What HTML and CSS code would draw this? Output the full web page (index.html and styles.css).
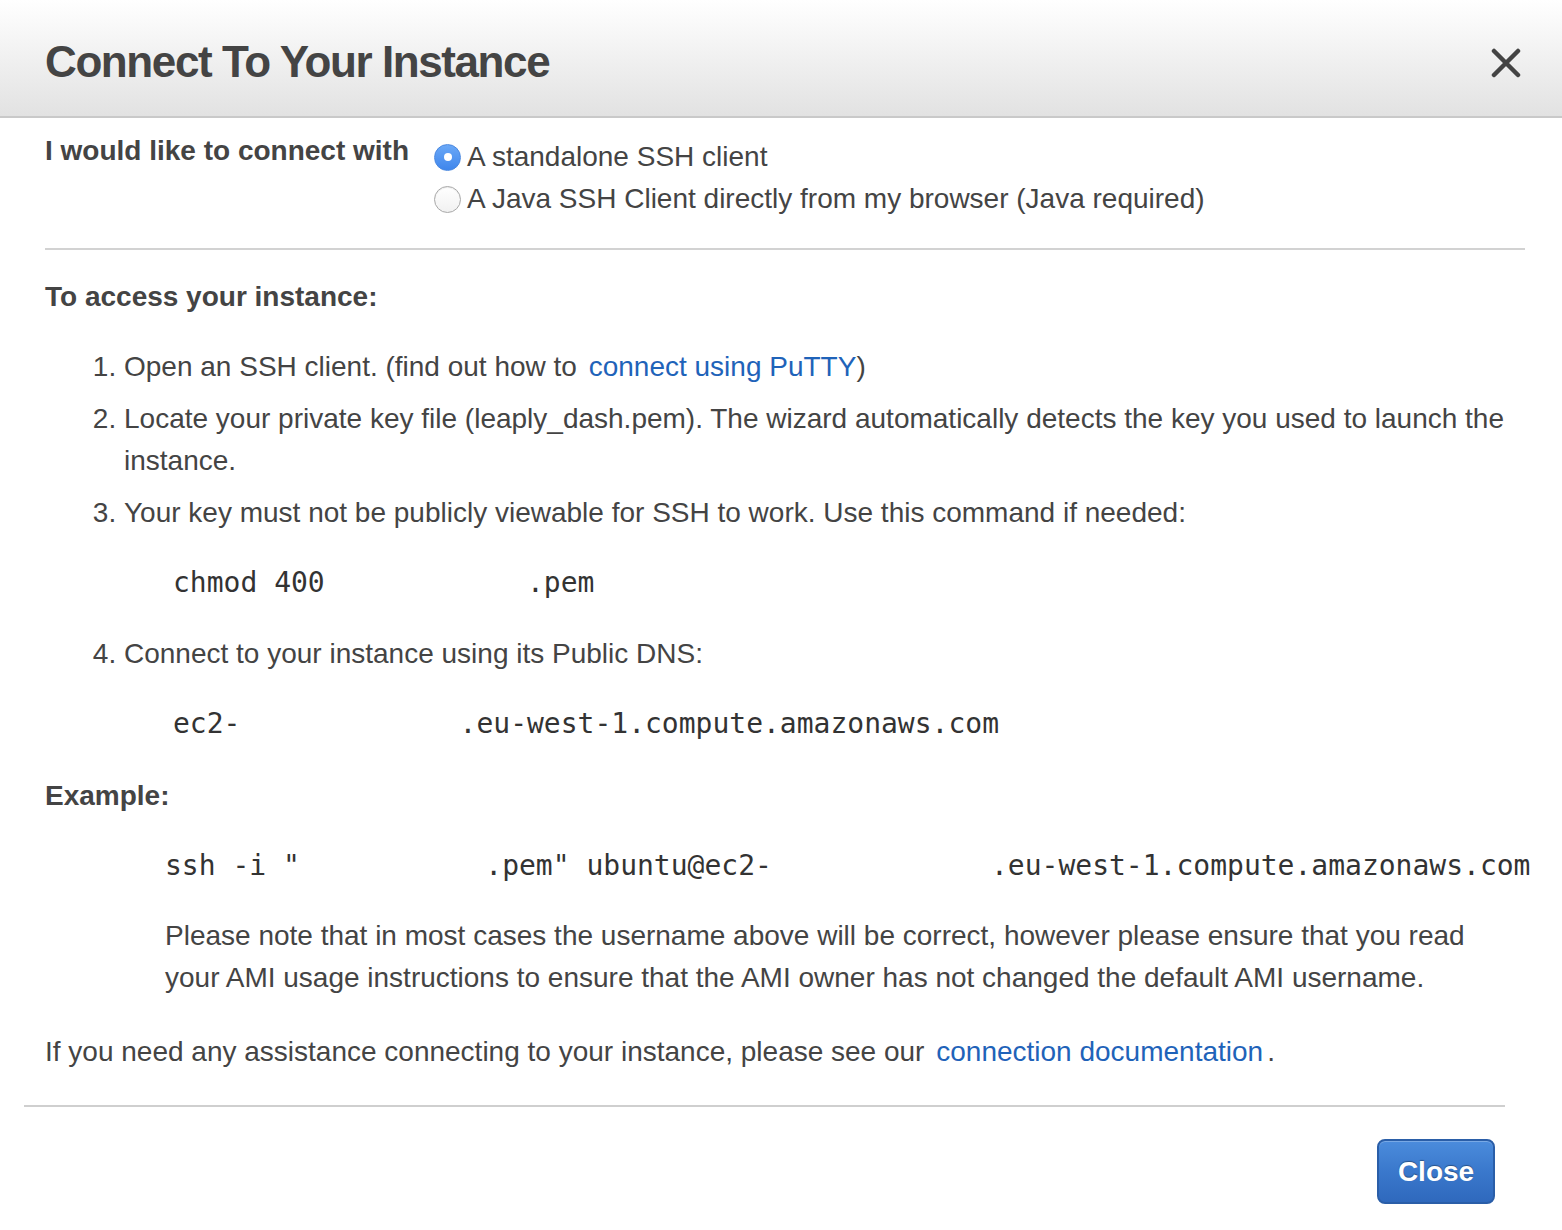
FILE: index.html
```html
<!DOCTYPE html>
<html lang="en">
<head>
<meta charset="utf-8">
<title>Connect To Your Instance</title>
<link rel="stylesheet" href="styles.css">
</head>
<body>
<div class="modal">
  <div class="modal-header">
    <h1 class="modal-title">Connect To Your Instance</h1>
    <span class="close-x" aria-label="Close">
      <svg width="30" height="30" viewBox="0 0 30 30"><path d="M3 3 L27 27 M27 3 L3 27" stroke="#444" stroke-width="4.5" stroke-linecap="round" fill="none"/></svg>
    </span>
  </div>
  <div class="modal-body">
    <div class="connect-row">
      <div class="connect-label">I would like to connect with</div>
      <div class="radio-group">
        <label class="radio-option"><span class="radio radio-on"><span class="radio-dot"></span></span>A standalone SSH client</label>
        <label class="radio-option"><span class="radio"></span>A Java SSH Client directly from my browser (Java required)</label>
      </div>
    </div>
    <div class="divider"></div>
    <div class="section-title">To access your instance:</div>
    <ol class="steps">
      <li>Open an SSH client. (find out how to <a class="link" href="#">connect using PuTTY</a>)</li>
      <li>Locate your private key file (leaply_dash.pem). The wizard automatically detects the key you used to launch the instance.</li>
      <li>Your key must not be publicly viewable for SSH to work. Use this command if needed:
        <div class="cmd cmd-indent">chmod 400            .pem</div>
      </li>
      <li class="after-code">Connect to your instance using its Public DNS:
        <div class="cmd cmd-indent">ec2-             .eu-west-1.compute.amazonaws.com</div>
      </li>
    </ol>
    <div class="section-title example-title">Example:</div>
    <div class="example">
      <div class="cmd">ssh -i "           .pem" ubuntu@ec2-             .eu-west-1.compute.amazonaws.com</div>
      <p class="note">Please note that in most cases the username above will be correct, however please ensure that you read your AMI usage instructions to ensure that the AMI owner has not changed the default AMI username.</p>
    </div>
    <p class="help">If you need any assistance connecting to your instance, please see our <a class="link link-doc" href="#">connection documentation</a>.</p>
  </div>
  <div class="modal-footer">
    <button class="btn-close" type="button">Close</button>
  </div>
</div>
</body>
</html>
```
FILE: styles.css
```css
html, body {
  margin: 0;
  padding: 0;
  background: #fff;
}
body {
  font-family: "Liberation Sans", Arial, Helvetica, sans-serif;
  font-size: 28px;
  line-height: 42px;
  color: #444;
}
.modal {
  width: 100%;
}
.modal-header {
  box-sizing: border-box;
  height: 118px;
  padding: 40px 41px 0 45px;
  display: flex;
  justify-content: space-between;
  align-items: flex-start;
  background: linear-gradient(to bottom, #ffffff 0%, #f2f2f2 45%, #e2e2e2 100%);
  border-bottom: 2px solid #c9c9c9;
}
.modal-title {
  margin: 0;
  font-size: 44px;
  line-height: 44px;
  font-weight: bold;
  letter-spacing: -1.4px;
  color: #444;
}
.close-x {
  display: block;
  width: 30px;
  height: 30px;
  margin-top: 8px;
}
.close-x svg {
  display: block;
}
.modal-body {
  padding: 0 37px 0 45px;
}
.connect-row {
  display: flex;
  padding-top: 12px;
}
.connect-label {
  font-weight: bold;
}
.radio-group {
  margin-left: 25px;
  margin-top: 6px;
}
.radio-option {
  display: flex;
  align-items: center;
  height: 42px;
}
.radio {
  box-sizing: border-box;
  width: 27px;
  height: 27px;
  border-radius: 50%;
  margin-right: 6px;
  border: 1.5px solid #a8a8a8;
  background: linear-gradient(to bottom, #ffffff, #f1f1f1);
  box-shadow: inset 0 1px 1px rgba(0,0,0,0.08);
  display: flex;
  align-items: center;
  justify-content: center;
  flex: none;
}
.radio-on {
  border: 1px solid #4a88e0;
  background: linear-gradient(to bottom, #6aa8f7, #3f86ec);
  box-shadow: none;
}
.radio-dot {
  width: 8px;
  height: 8px;
  border-radius: 50%;
  background: #fff;
}
.divider {
  height: 2px;
  background: #d2d2d2;
  margin-top: 28px;
}
.section-title {
  font-weight: bold;
  margin-top: 26px;
}
.steps {
  margin: 28px 0 0;
  padding-left: 79px;
}
.steps li + li {
  margin-top: 10px;
}
.steps li.after-code {
  margin-top: 29px;
}
.cmd {
  font-family: "DejaVu Sans Mono", "Liberation Mono", monospace;
  font-size: 28px;
  line-height: 42px;
  white-space: pre;
  color: #333;
  margin-top: 28px;
}
.cmd-indent {
  margin-left: 49px;
}
.example-title {
  margin-top: 30px;
}
.example {
  margin-left: 120px;
}
.note {
  margin: 28px 0 0;
}
.help {
  margin: 32px 0 0;
}
.link {
  color: #1f63b9;
  text-decoration: none;
  margin-left: 4px;
}
.link-doc {
  margin-right: 4px;
}
.modal-footer {
  margin: 32px 57px 0 24px;
  border-top: 2px solid #cfcfcf;
  padding: 32px 10px 20px 0;
  display: flex;
  justify-content: flex-end;
}
.btn-close {
  box-sizing: border-box;
  width: 118px;
  height: 65px;
  padding: 0;
  font-family: "Liberation Sans", Arial, Helvetica, sans-serif;
  font-size: 28px;
  font-weight: bold;
  color: #fff;
  text-shadow: 0 -1px 1px rgba(0,0,0,0.35);
  background: linear-gradient(to bottom, #4b8cdc 0%, #3a78cc 50%, #2f69bd 100%);
  border: 2px solid #2a5ea8;
  border-radius: 8px;
  box-shadow: inset 0 1px 0 rgba(255,255,255,0.25);
}
```
